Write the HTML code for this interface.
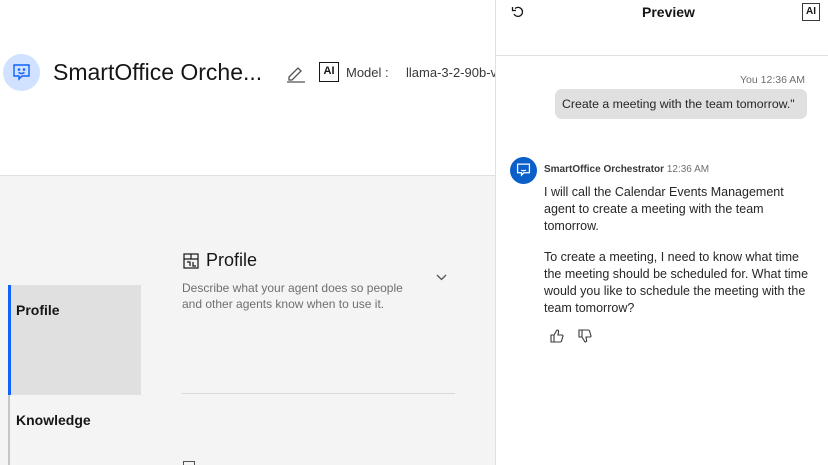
<!DOCTYPE html>
<html><head><style>
*{margin:0;padding:0;box-sizing:border-box}
body{width:828px;height:465px;overflow:hidden;font-family:"Liberation Sans",sans-serif;background:#fff;position:relative;color:#161616}
.a{position:absolute}
</style></head><body>
<div class="a" style="left:0;top:0;width:496px;height:175px;background:#fff"></div>
<div class="a" style="left:0;top:175px;width:496px;height:290px;background:#f4f4f4;border-top:1px solid #e0e0e0"></div>
<div class="a" style="left:3px;top:54px;width:37px;height:37px;border-radius:50%;background:#d0e2ff"></div>
<svg class="a" style="left:12px;top:63px" width="19" height="19" viewBox="0 0 19 19" fill="none" stroke="#0f62fe" stroke-width="1.4"><path d="M2 2h15v11h-7l-3 3v-3H2z"/><circle cx="7" cy="6.5" r=".6" fill="#0f62fe"/><circle cx="12" cy="6.5" r=".6" fill="#0f62fe"/><path d="M6.5 9.5q3 2 6 0"/></svg>
<div class="a" style="left:53px;top:59px;font-size:23px;color:#161616">SmartOffice Orche...</div>
<svg class="a" style="left:286px;top:64px" width="20" height="19" viewBox="0 0 20 19" fill="none" stroke="#525252" stroke-width="1.3"><path d="M3 13l9-9 3 3-9 9H3z"/><path d="M1 18h18"/></svg>
<div class="a" style="left:319px;top:62px;width:20px;height:20px;border:1.5px solid #161616;font-size:11px;font-weight:bold;text-align:center;line-height:17px">AI</div>
<div class="a" style="left:346px;top:65px;font-size:13px;color:#393939">Model :</div>
<div class="a" style="left:406px;top:65px;font-size:13px;color:#393939;white-space:nowrap;width:90px;overflow:hidden">llama-3-2-90b-vision</div>
<div class="a" style="left:8px;top:285px;width:2px;height:180px;background:#c6c6c6"></div>
<div class="a" style="left:8px;top:285px;width:3px;height:110px;background:#0f62fe"></div>
<div class="a" style="left:11px;top:285px;width:130px;height:110px;background:#e0e0e0"></div>
<div class="a" style="left:16px;top:302px;font-size:14px;font-weight:bold">Profile</div>
<div class="a" style="left:16px;top:412px;font-size:14px;font-weight:bold">Knowledge</div>
<svg class="a" style="left:183px;top:253px" width="16" height="16" viewBox="0 0 16 16" fill="none" stroke="#161616" stroke-width="1.2"><rect x="1" y="1" width="14" height="14"/><path d="M1 6h14M8 1v5M4 9h3v4M10 9v4h3"/></svg>
<div class="a" style="left:206px;top:250px;font-size:18px">Profile</div>
<div class="a" style="left:182px;top:280px;font-size:12px;color:#6f6f6f;line-height:16px">Describe what your agent does so people<br>and other agents know when to use it.</div>
<svg class="a" style="left:436px;top:274px" width="11" height="8" viewBox="0 0 11 8" fill="none" stroke="#525252" stroke-width="1.3"><path d="M1 1l4.5 4.5L10 1"/></svg>
<div class="a" style="left:182px;top:393px;width:273px;height:1px;background:#d8d8d8"></div>
<div class="a" style="left:183px;top:461px;width:12px;height:4px;border:1.2px solid #525252;border-bottom:none"></div>
<div class="a" style="left:495px;top:0;width:1px;height:465px;background:#e0e0e0"></div>
<div class="a" style="left:496px;top:55px;width:332px;height:1px;background:#e0e0e0"></div>
<svg class="a" style="left:511px;top:5px" width="14" height="14" viewBox="0 0 14 14" fill="none" stroke="#161616" stroke-width="1.3"><path d="M4 3.5A4.5 4.5 0 1 1 3 9"/><path d="M1.5 2v3.5H5"/></svg>
<div class="a" style="left:642px;top:4px;font-size:14px;font-weight:bold">Preview</div>
<div class="a" style="left:802px;top:3px;width:18px;height:18px;border:1.3px solid #393939;font-size:10px;font-weight:bold;text-align:center;line-height:16px">AI</div>
<div class="a" style="left:740px;top:74px;font-size:10.5px;color:#6f6f6f">You 12:36 AM</div>
<div class="a" style="left:555px;top:89px;width:252px;height:30px;border-radius:7px;background:#e0e0e0;font-size:12.3px;padding:8px 7px;color:#262626;white-space:nowrap">Create a meeting with the team tomorrow."</div>
<div class="a" style="left:510px;top:157px;width:27px;height:27px;border-radius:50%;background:#0b5fc9"></div>
<svg class="a" style="left:516px;top:162px" width="15" height="16" viewBox="0 0 19 19" fill="none" stroke="#fff" stroke-width="1.6"><path d="M2 2h15v11h-7l-3 3v-3H2z"/><path d="M6.5 9.5q3 2 6 0"/></svg>
<div class="a" style="left:544px;top:164px;font-size:10px;color:#393939"><b>SmartOffice Orchestrator</b> <span style="color:#6f6f6f">12:36 AM</span></div>
<div class="a" style="left:544px;top:184px;width:284px;font-size:12.5px;line-height:16.8px;color:#262626;white-space:nowrap">I will call the Calendar Events Management<br>agent to create a meeting with the team<br>tomorrow.<div style="height:15px"></div>To create a meeting, I need to know what time<br>the meeting should be scheduled for. What time<br>would you like to schedule the meeting with the<br>team tomorrow?</div>
<svg class="a" style="left:550px;top:329px" width="14" height="14" viewBox="0 0 14 14" fill="#fff" stroke="#393939" stroke-width="1.1"><path d="M1 6h3v7H1zM4 6l3-5q2 0 1.5 2L8 6h4q1 0 1 1l-1.5 5q-.3 1-1.5 1H4"/></svg>
<svg class="a" style="left:578px;top:329px" width="14" height="14" viewBox="0 0 14 14" fill="#fff" stroke="#393939" stroke-width="1.1"><path d="M1 1h3v7H1zM4 8l3 5q2 0 1.5-2L8 8h4q1 0 1-1l-1.5-5Q11.2 1 10 1H4"/></svg>
</body></html>
